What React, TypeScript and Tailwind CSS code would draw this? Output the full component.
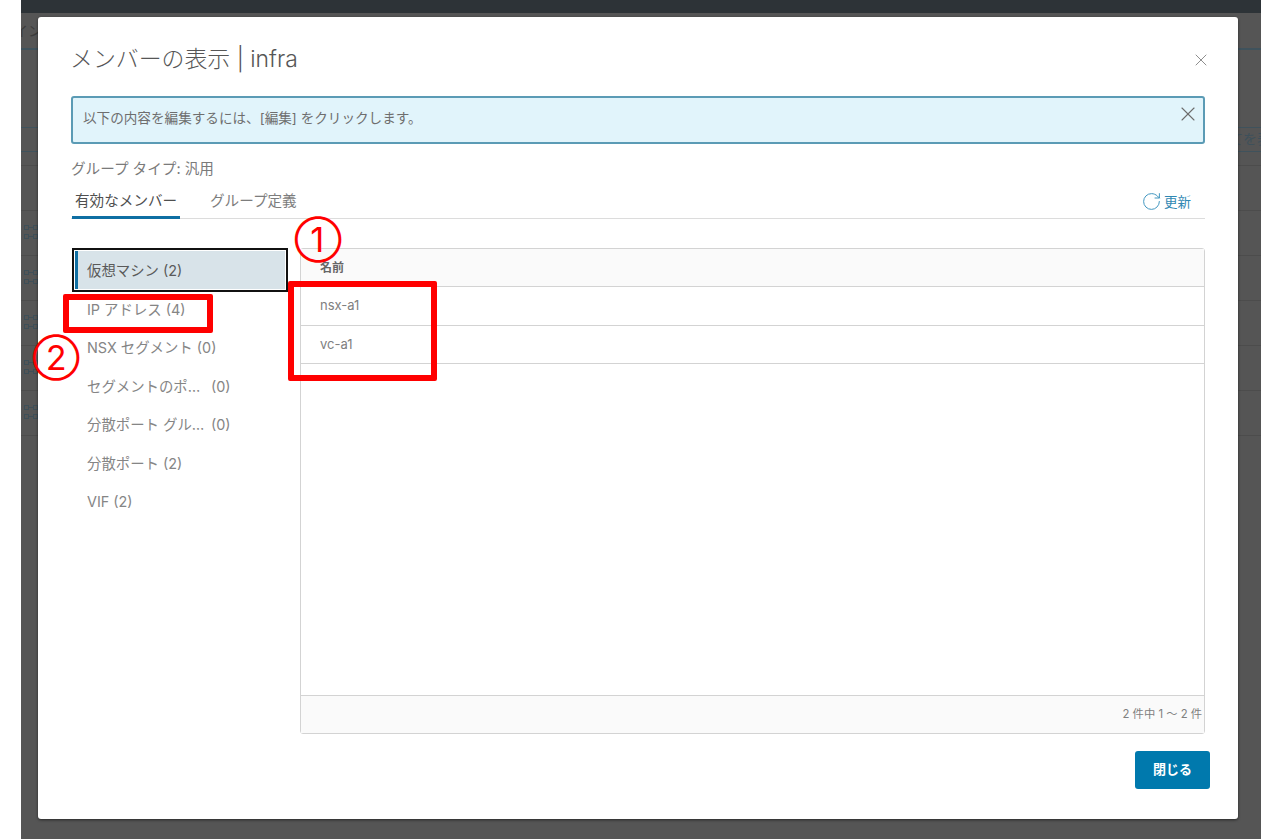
import { RotateCw, X } from "lucide-react";

const font = { fontFamily: '"Inter", "Noto Sans CJK JP", sans-serif' };

function Net() {
  return (
    <svg width="17" height="15" viewBox="0 0 17 15" fill="none" stroke="#3e4f58" strokeWidth="1" className="block">
      <rect x="0.5" y="0.5" width="4" height="4" />
      <rect x="9.5" y="0.5" width="4" height="4" />
      <rect x="0.5" y="9.5" width="4" height="4" />
      <rect x="9.5" y="9.5" width="4" height="4" />
      <path d="M4.5 2.5H9.5M4.5 11.5H9.5" />
    </svg>
  );
}

function BgRow({ icon }: { icon?: boolean }) {
  return (
    <div className="h-[45px] border-b border-[#4c4c4c] pl-[3px] pt-[14px]">{icon ? <Net /> : null}</div>
  );
}

const items: { label: string; count?: string; short?: boolean }[] = [
  { label: "IP アドレス (4)" },
  { label: "NSX セグメント (0)" },
  { label: "セグメントのポート", count: "(0)", short: true },
  { label: "分散ポート グループ", count: "(0)", short: true },
  { label: "分散ポート (2)" },
  { label: "VIF (2)" },
];

export default function App() {
  return (
    <div className="relative h-[839px] w-[1261px] overflow-hidden bg-white" style={font}>
      <div className="ml-[21px] flex h-full flex-col overflow-hidden bg-[#555555]">
        <div className="h-[13px] bg-[#2d3337]" />
        <div className="flex h-[37px] items-center justify-between border-b-2 border-[#3f525c] text-[14px] text-[#3c3c3c]">
          <span className="-ml-[7px]">イン</span>
        </div>
        <div className="h-[77px]" />
        <div className="flex h-[25px] items-center justify-end border-y border-[#3f525c] pb-[2px] text-[14px] text-[#3e505a]">
          <span className="-mr-[10px] whitespace-nowrap">てを表</span>
        </div>
        <div className="h-[14px] border-b border-[#4c4c4c]" />
        <BgRow />
        <BgRow icon />
        <BgRow icon />
        <BgRow icon />
        <BgRow icon />
        <BgRow icon />
      </div>

      <div className="absolute left-[38px] top-[17px] flex h-[802px] w-[1200px] flex-col rounded-[3px] bg-white px-[33px] shadow-[0_1px_3px_rgba(0,0,0,0.55)]">
        <div className="flex h-[79px] items-start justify-between">
          <h1 className="-ml-px mt-[27px] text-[22.9px] font-light leading-[30px] text-[#565656]">メンバーの表示 | infra</h1>
          <X size={20} strokeWidth={1} className="-mr-[6px] mt-[33px] text-[#777777]" />
        </div>
        <div className="flex h-[48px] items-start justify-between rounded-[3px] border-2 border-[#5b9bb5] bg-[#e1f4fb] pl-[10px] pr-[3px]">
          <span className="mt-[10px] text-[13.6px] leading-[20px] text-[#6e6e6e]">以下の内容を編集するには、[編集] をクリックします。</span>
          <X size={24} strokeWidth={1.1} className="mt-[4px] text-[#6c6c6c]" />
        </div>
        <div className="mt-[15px] text-[14.6px] leading-[20px] text-[#7a7a7a]">グループ タイプ: 汎用</div>
        <div className="mt-[1px] flex h-[39px] items-start justify-between border-b border-[#dcdcdc] pr-[14px]">
          <div className="flex">
            <div className="ml-[1px] h-[39px] w-[108px] border-b-[3px] border-[#0f6fa3] pl-[3px] pt-[11px] text-[14.6px] leading-[20px] text-[#4f4f4f]">有効なメンバー</div>
            <div className="ml-[30px] pt-[11px] text-[14.6px] leading-[20px] text-[#7d7d7d]">グループ定義</div>
          </div>
          <div className="mt-[11px] flex items-center gap-[2px] text-[13.5px] leading-[20px] text-[#2f88b3]">
            <RotateCw size={21} strokeWidth={1.1} className="text-[#3b93bd]" />
            <span>更新</span>
          </div>
        </div>
        <div className="mt-[29px] flex h-[486px]">
          <div className="ml-[1px] w-[216px] shrink-0 text-[14.4px] text-[#858585]">
            <div className="flex h-[44px] items-center border-2 border-[#111111] p-px">
              <div className="flex h-full w-full items-center border-l-[3px] border-[#0f6fa3] bg-[#d8e3e9] pl-[9px] pt-px text-[#5a5a5a]">仮想マシン (2)</div>
            </div>
            <div className="-mt-[1.5px]">
              {items.map((it) => (
                <div key={it.label} className="flex h-[38.5px] items-center pl-[15px]">
                  {it.short ? (
                    <>
                      <span className="w-[120px] truncate">{it.label}</span>
                      <span className="ml-[4px]">{it.count}</span>
                    </>
                  ) : (
                    <span>{it.label}</span>
                  )}
                </div>
              ))}
            </div>
          </div>
          <div className="ml-[12px] flex flex-1 flex-col rounded-[3px] border border-[#d3d3d3] text-[#808080]">
            <div className="flex h-[38px] items-center border-b border-[#d3d3d3] bg-[#fafafa] pl-[19px] text-[12px] font-bold text-[#666666]">名前</div>
            <div className="flex h-[39px] items-center border-b border-[#d3d3d3] pl-[19px] text-[13px]">nsx-a1</div>
            <div className="flex h-[38px] items-center border-b border-[#d3d3d3] pl-[19px] text-[13px]">vc-a1</div>
            <div className="flex-1" />
            <div className="flex h-[38px] items-center justify-end border-t border-[#d3d3d3] bg-[#fafafa] pr-[2px] text-[11.3px]">2 件中 1 ～ 2 件</div>
          </div>
        </div>
        <div className="mt-[17px] flex justify-end">
          <button className="mr-[-5px] h-[38px] w-[75px] rounded-[3px] bg-[#0079ad] text-[13px] font-semibold text-white">閉じる</button>
        </div>
      </div>

      <div className="absolute left-[288px] top-[281px] h-[100px] w-[149px] rounded-[2px] border-[6px] border-[#ff0000]" />
      <div className="absolute left-[63px] top-[294px] h-[39px] w-[150px] rounded-[2px] border-[6px] border-[#ff0000]" />
      <div className="absolute left-[292px] top-[214px] flex h-[52px] w-[52px] items-center justify-center text-[34px] leading-none text-[#ff0000]">①</div>
      <div className="absolute left-[30px] top-[332px] flex h-[52px] w-[52px] items-center justify-center text-[34px] leading-none text-[#ff0000]">②</div>
    </div>
  );
}
